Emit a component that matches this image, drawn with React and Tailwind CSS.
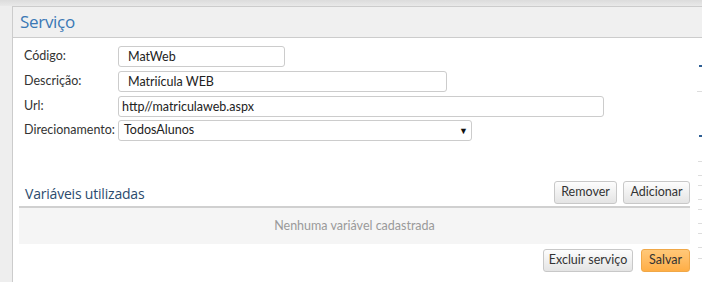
import React from 'react';

const Field = ({ label, children }) => (
  <div className="flex items-center h-[21px]">
    <label className="w-[94px] text-[12.5px] text-[#333]">{label}</label>
    {children}
  </div>
);

const Btn = ({ children, className = '' }) => (
  <button
    className={`h-[23px] rounded-[3px] border border-[#c8c8c8] bg-gradient-to-b from-[#fdfdfd] to-[#e4e4e4] text-[12.5px] text-[#333] ${className}`}
  >
    {children}
  </button>
);

const heading = { fontFamily: '"Open Sans", "Noto Sans", sans-serif' };

const App = () => {
  return (
    <div
      className="w-[702px] h-[282px] overflow-hidden bg-[#eeeeee] flex flex-col"
      style={{ fontFamily: 'Lato, "Noto Sans", sans-serif' }}
    >
      <div className="h-[6px] bg-gradient-to-b from-[#dcdcdc] to-[#e9e9e9]" />
      <div className="flex flex-1 pl-[12px]">
        <div className="flex-1 flex flex-col border-l border-t border-[#cccccc]">
          {/* header */}
          <div className="h-[31px] bg-[#f0f0f0] border-b border-[#cccccc] flex items-center pl-[7px]">
            <h1 style={heading} className="text-[17px] text-[#3a78b5] tracking-[-0.3px]">
              Serviço
            </h1>
          </div>

          <div className="flex-1 flex bg-white">
            <div className="flex-1 flex flex-col">
              {/* form */}
              <div className="pl-[11px] pt-[8px] flex flex-col">
                <Field label="Código:">
                  <input
                    readOnly
                    defaultValue="MatWeb"
                    className="w-[167px] h-[21px] border border-[#cccccc] rounded-[3px] pl-[9px] text-[12.5px] text-[#222] outline-none"
                  />
                </Field>
                <div className="mt-[4px]">
                  <Field label="Descrição:">
                    <input
                      readOnly
                      defaultValue="Matriícula WEB"
                      className="w-[329px] h-[21px] border border-[#cccccc] rounded-[3px] pl-[9px] text-[12.5px] text-[#222] outline-none"
                    />
                  </Field>
                </div>
                <div className="mt-[4px]">
                  <Field label="Url:">
                    <input
                      readOnly
                      defaultValue="http//matriculaweb.aspx"
                      className="w-[486px] h-[21px] border border-[#cccccc] rounded-[3px] pl-[3px] text-[12.5px] text-[#222] outline-none"
                    />
                  </Field>
                </div>
                <div className="mt-[3px]">
                  <Field label="Direcionamento:">
                    <div className="w-[354px] h-[21px] border border-[#cccccc] rounded-[3px] pl-[5px] pr-[3px] flex items-center justify-between text-[12.5px] text-[#222]">
                      <span>TodosAlunos</span>
                      <span className="text-[9px] text-[#111]">▼</span>
                    </div>
                  </Field>
                </div>
              </div>

              {/* variables */}
              <div className="mt-[40px] ml-[6px] mr-[7px] flex flex-col">
                <div className="flex items-center justify-between pb-[2px]">
                  <h2 style={heading} className="pl-[6px] pt-[2px] text-[14px] text-[#2c4b6e] tracking-[-0.2px]">
                    Variáveis utilizadas
                  </h2>
                  <div className="flex gap-[6px]">
                    <Btn className="w-[63px]">Remover</Btn>
                    <Btn className="w-[67px]">Adicionar</Btn>
                  </div>
                </div>
                <div className="h-[2px] bg-[#d0d0d0]" />
                <div className="h-[36px] bg-[#f5f5f5] flex items-center justify-center text-[12.5px] text-[#9a9a9a]">
                  Nenhuma variável cadastrada
                </div>
                <div className="flex justify-end gap-[8px] mt-[5px]">
                  <Btn className="w-[90px]">Excluir serviço</Btn>
                  <button className="w-[49px] h-[23px] rounded-[3px] border border-[#f0a848] bg-gradient-to-b from-[#ffc878] to-[#ffae45] text-[12.5px] text-[#333]">
                    Salvar
                  </button>
                </div>
              </div>
            </div>

            {/* clipped neighbour panel */}
            <div className="w-[5px] flex flex-col">
              <div className="mt-[27px] ml-[2px] h-[2px] bg-[#2e5f94]" />
              <div className="mt-[24px] h-[1px] bg-[#dddddd]" />
              <div className="mt-[43px] ml-[2px] h-[2px] bg-[#2e5f94]" />
              <div className="mt-[24px] ml-[1px] h-[1px] bg-[#dddddd]" />
              <div className="mt-[13px] ml-[1px] h-[1px] bg-[#dddddd]" />
              <div className="mt-[9px] ml-[1px] h-[1px] bg-[#dddddd]" />
              <div className="mt-[13px] ml-[1px] h-[1px] bg-[#dddddd]" />
              <div className="mt-[9px] ml-[1px] h-[1px] bg-[#dddddd]" />
              <div className="mt-[13px] ml-[1px] h-[1px] bg-[#dddddd]" />
              <div className="mt-[9px] ml-[1px] h-[1px] bg-[#dddddd]" />
              <div className="mt-[13px] ml-[1px] h-[1px] bg-[#dddddd]" />
              <div className="mt-[10px] ml-[1px] h-[1px] bg-[#dddddd]" />
            </div>
          </div>
        </div>
      </div>
    </div>
  );
};

export default App;
